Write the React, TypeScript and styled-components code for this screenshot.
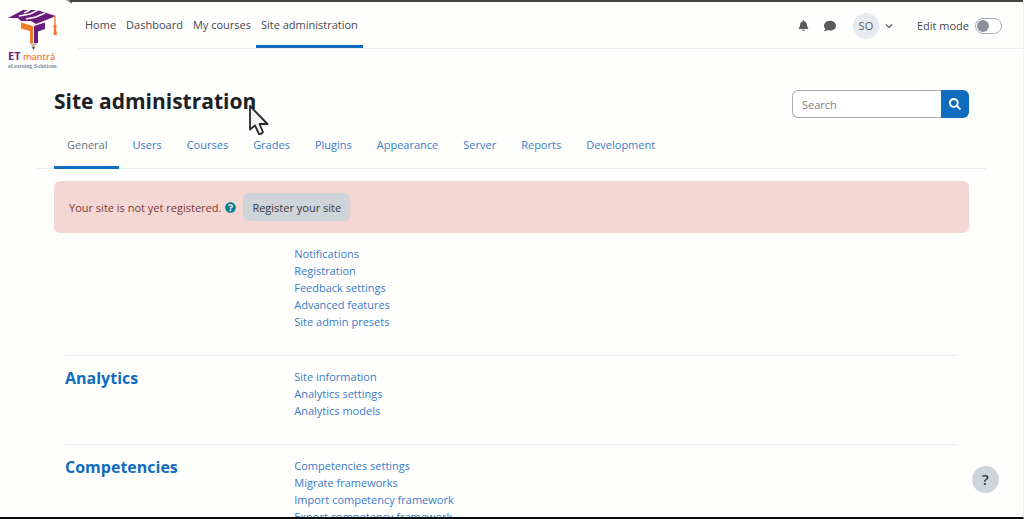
import React from 'react';
import styled, { createGlobalStyle, css } from 'styled-components';
import { FaBell, FaComment, FaSearch, FaQuestionCircle } from 'react-icons/fa';

const palette = {
  page: '#fefefd',
  text: '#1d2125',
  link: '#3a7bc8',
  primary: '#0f6cbf',
  muted: '#6a6f76',
  rule: '#e9ebef',
};

const GlobalStyle = createGlobalStyle`
  *, *::before, *::after { box-sizing: border-box; }
  body {
    margin: 0;
    background: ${palette.page};
    color: ${palette.text};
    font-family: "Open Sans", "Noto Sans", sans-serif;
    font-size: 11px;
    line-height: 17px;
  }
  button, input { font: inherit; color: inherit; }
`;

const Page = styled.div`
  height: 100vh;
  overflow: hidden;
  position: relative;
  border-bottom: 2px solid #0c0c0c;
  border-right: 1px solid #f1f2f5;
`;

const Header = styled.header`
  display: flex;
  align-items: flex-start;
  height: 49px;
`;

const Brand = styled.a`
  flex: none;
  width: 70px;
  height: 49px;
  svg { display: block; }
`;

const Bar = styled.div`
  flex: 1;
  display: flex;
  justify-content: space-between;
  height: 49px;
  padding: 0 21px 0 10px;
  border-top: 2px solid #434240;
  position: relative;
  &::after {
    content: '';
    position: absolute;
    left: 8px;
    right: 0;
    bottom: 0;
    border-bottom: 1px solid ${palette.rule};
  }
`;

const PrimaryNav = styled.nav`
  display: flex;
`;

const NavLink = styled.a<{ $active?: boolean }>`
  display: flex;
  align-items: center;
  padding: 2px 5px 0;
  margin-bottom: 1px;
  border-bottom: 3px solid ${(p) => (p.$active ? palette.primary : 'transparent')};
  color: #45494e;
  text-decoration: none;
`;

const Tools = styled.div`
  display: flex;
  align-items: center;
`;

const IconButton = styled.button`
  display: flex;
  align-items: center;
  justify-content: center;
  width: 26px;
  height: 26px;
  padding: 0;
  border: 0;
  background: none;
  color: #5b5b5c;
`;

const UserMenu = styled.button`
  display: flex;
  align-items: center;
  gap: 6px;
  margin: 0 24px 0 10px;
  padding: 0;
  border: 0;
  background: none;
`;

const Avatar = styled.span`
  width: 26px;
  height: 26px;
  border-radius: 50%;
  background: #e7eaee;
  color: #5a5f66;
  font-size: 11px;
  line-height: 26px;
  text-align: center;
`;

const EditLabel = styled.label`
  display: flex;
  align-items: center;
  gap: 6px;
  color: #45494e;
`;

const Switch = styled.input`
  appearance: none;
  width: 27px;
  height: 16px;
  margin: 0;
  padding: 1px;
  border: 1px solid #a9adb5;
  border-radius: 8px;
  background: #fff;
  &::before {
    content: '';
    display: block;
    width: 12px;
    height: 12px;
    border-radius: 50%;
    background: #8b919b;
  }
  &:checked { background: ${palette.primary}; }
  &:checked::before { margin-left: 11px; background: #fff; }
`;

const Main = styled.main`
  padding: 41px 54px 0;
`;

const TitleRow = styled.div`
  display: flex;
  align-items: flex-start;
  justify-content: space-between;
`;

const Title = styled.h1`
  margin: 0;
  font-size: 21px;
  line-height: 23px;
  font-weight: 700;
`;

const TitleWrap = styled.div`
  position: relative;
`;

const Pointer = styled.svg`
  position: absolute;
  left: 194px;
  top: 14px;
`;

const SearchForm = styled.form`
  display: flex;
  width: 177px;
  height: 28px;
`;

const SearchInput = styled.input`
  flex: 1;
  min-width: 0;
  padding: 0 9px;
  border: 1px solid #a9adb4;
  border-right: 0;
  border-radius: 6px 0 0 6px;
  background: #fff;
  outline: 0;
  &::placeholder { color: #7b8087; opacity: 1; }
`;

const SearchButton = styled.button`
  display: flex;
  align-items: center;
  justify-content: center;
  width: 28px;
  padding: 0;
  border: 0;
  border-radius: 0 6px 6px 0;
  background: ${palette.primary};
  color: #fff;
`;

const Tabs = styled.nav`
  display: flex;
  margin: 5px -17px 0;
  padding: 0 17px;
  border-bottom: 1px solid ${palette.rule};
`;

const Tab = styled.a<{ $active?: boolean }>`
  padding: 13px 12px 13px 13px;
  margin-bottom: -1px;
  border-bottom: 3px solid transparent;
  color: ${palette.link};
  text-decoration: none;
  ${(p) => p.$active && css`
    color: ${palette.muted};
    border-bottom-color: ${palette.primary};
  `}
`;

const Alert = styled.div`
  display: flex;
  align-items: center;
  margin-top: 12px;
  padding: 12px 15px;
  border-radius: 6px;
  background: #f4d6d2;
  color: #7a3a37;
`;

const HelpIcon = styled.button`
  display: flex;
  margin: 0 7px 0 4px;
  padding: 0;
  border: 0;
  background: none;
  color: #008196;
`;

const RegisterButton = styled.button`
  height: 28px;
  padding: 0 9px;
  border: 0;
  border-radius: 6px;
  background: #ced4da;
  color: #33383d;
`;

const Sections = styled.div`
  padding: 0 11px;
`;

const Section = styled.section`
  display: grid;
  grid-template-columns: 1fr 3fr;
  column-gap: 8px;
  padding: 12px 0 25px;
  border-bottom: 1px solid ${palette.rule};
`;

const SectionTitle = styled.h2`
  margin: 0;
  font-size: 16px;
  line-height: 21px;
  font-weight: 700;
  a { color: ${palette.primary}; text-decoration: none; }
`;

const LinkList = styled.ul`
  margin: 0;
  padding: 0;
  list-style: none;
  a { color: ${palette.link}; text-decoration: none; }
`;

const HelpButton = styled.button`
  position: fixed;
  right: 25px;
  bottom: 26px;
  width: 27px;
  height: 27px;
  padding: 0;
  border: 0;
  border-radius: 50%;
  background: #ced4da;
  color: #2b3035;
  font-size: 15px;
  font-weight: 600;
`;

const navItems = ['Home', 'Dashboard', 'My courses', 'Site administration'];
const tabs = ['General', 'Users', 'Courses', 'Grades', 'Plugins', 'Appearance', 'Server', 'Reports', 'Development'];
const sections = [
  { title: '', links: ['Notifications', 'Registration', 'Feedback settings', 'Advanced features', 'Site admin presets'] },
  { title: 'Analytics', links: ['Site information', 'Analytics settings', 'Analytics models'] },
  {
    title: 'Competencies',
    links: ['Competencies settings', 'Migrate frameworks', 'Import competency framework', 'Export competency framework'],
  },
];

function Logo() {
  return (
    <svg width="78" height="76" viewBox="0 0 78 76" role="img" aria-label="ET mantra eLearning Solutions">
      <path d="M66 0H72V4Z" fill="#8a8a88" />
      <path d="M8 18L23 10H37L56 16L36 24L31 21H21L18 18Z" fill="#6a1b7c" />
      <path d="M38 10L30 14L19 16M45 13L36 17L26 19M30 10L24 13" fill="none" stroke="#fefefd" strokeWidth="1.500" />
      <path d="M21 22.500L33 26V43H30V31L21 28.500Z" fill="#f37a2c" />
      <path d="M34 26L45 22.500V29L38 31.500V43H34Z" fill="#6a1b7c" />
      <path d="M30 43H37L33.500 50Z" fill="#cdbfb6" />
      <path d="M32 47H35L33.500 50Z" fill="#55505a" />
      <path d="M55 16V26" stroke="#f08a4a" strokeWidth="1.500" />
      <circle cx="55" cy="26.500" r="1.800" fill="#ee7a33" />
      <path d="M54 28H56L57 35H53.500Z" fill="#ee7a33" />
      <text x="8" y="60" fontFamily="Open Sans, sans-serif" fontWeight="700" fontSize="11" fill="#6a1b7c">ET</text>
      <text x="23" y="60" fontFamily="Open Sans, sans-serif" fontWeight="600" fontSize="9" fill="#ee7a33">mantrá</text>
      <text x="8" y="68" fontFamily="Liberation Serif, serif" fontSize="6" fill="#46536a">eLearning Solutions</text>
    </svg>
  );
}

export default function App() {
  return (
    <Page>
      <GlobalStyle />
      <Header>
        <Brand href="#"><Logo /></Brand>
        <Bar>
          <PrimaryNav aria-label="Primary">
            {navItems.map((item) => (
              <NavLink key={item} href="#" $active={item === 'Site administration'}>{item}</NavLink>
            ))}
          </PrimaryNav>
          <Tools>
            <IconButton aria-label="Notifications"><FaBell size={11} /></IconButton>
            <IconButton aria-label="Messages"><FaComment size={12} /></IconButton>
            <UserMenu aria-label="User menu">
              <Avatar>SO</Avatar>
              <svg width="8" height="8" viewBox="0 0 8 8" fill="none" stroke="#5a5f66" strokeWidth="1.2">
                <path d="M1 2.5L4 5.5L7 2.5" />
              </svg>
            </UserMenu>
            <EditLabel>
              Edit mode
              <Switch type="checkbox" role="switch" />
            </EditLabel>
          </Tools>
        </Bar>
      </Header>
      <Main>
        <TitleRow>
          <TitleWrap>
            <Title>Site administration</Title>
            <Pointer width="22" height="32" viewBox="0 0 22 32" aria-hidden="true">
              <path d="M2 2V25.500L7 21.500L11 30Q13.500 30.500 15 28L11.500 20H19.500Z" fill="#f3f3f4" stroke="#25282c" strokeWidth="1.800" strokeLinejoin="round" />
            </Pointer>
          </TitleWrap>
          <SearchForm role="search" onSubmit={(e) => e.preventDefault()}>
            <SearchInput type="text" placeholder="Search" aria-label="Search" />
            <SearchButton aria-label="Search"><FaSearch size={12} /></SearchButton>
          </SearchForm>
        </TitleRow>
        <Tabs aria-label="Site administration">
          {tabs.map((tab) => (
            <Tab key={tab} href="#" $active={tab === 'General'}>{tab}</Tab>
          ))}
        </Tabs>
        <Alert role="alert">
          Your site is not yet registered.
          <HelpIcon aria-label="Help"><FaQuestionCircle size={11} /></HelpIcon>
          <RegisterButton>Register your site</RegisterButton>
        </Alert>
        <Sections>
          {sections.map((section, index) => (
            <Section key={index}>
              {section.title ? <SectionTitle><a href="#">{section.title}</a></SectionTitle> : <span />}
              <LinkList>
                {section.links.map((link) => (
                  <li key={link}><a href="#">{link}</a></li>
                ))}
              </LinkList>
            </Section>
          ))}
        </Sections>
      </Main>
      <HelpButton aria-label="Show footer">?</HelpButton>
    </Page>
  );
}
